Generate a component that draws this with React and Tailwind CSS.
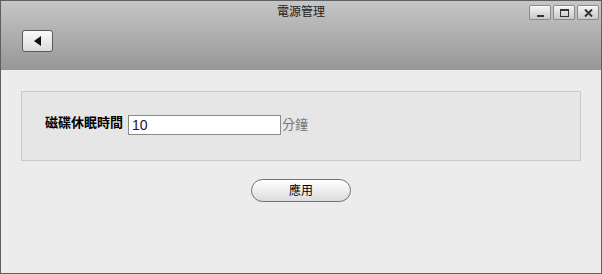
import React from 'react'

const WinBtn = ({ children }) => (
  <div className="w-[22px] h-[15px] rounded-[2px] border border-[#8a8a8a] bg-gradient-to-b from-[#f4f4f4] to-[#c8c8c8] flex items-center justify-center shadow-[inset_0_1px_0_#fff]">
    {children}
  </div>
)

const App = () => {
  return (
    <div className="w-[602px] h-[274px] border border-[#5f5f5f] bg-[#ececec] flex flex-col font-['Liberation_Sans','Noto_Sans_CJK_TC',sans-serif]">
      <div className="h-[69px] bg-gradient-to-b from-[#c6c6c6] to-[#979797] relative">
        <div className="text-center text-[12px] leading-[20px] text-[#222] pt-px">電源管理</div>
        <div className="absolute top-[4px] right-[2px] flex gap-[2px]">
          <WinBtn>
            <div className="w-[7px] h-[2px] bg-[#333] mt-[6px]" />
          </WinBtn>
          <WinBtn>
            <div className="w-[9px] h-[8px] border border-[#333] border-t-2" />
          </WinBtn>
          <WinBtn>
            <svg width="9" height="8" viewBox="0 0 9 8">
              <path d="M1 0.5 L8 7.5 M8 0.5 L1 7.5" stroke="#333" strokeWidth="2" />
            </svg>
          </WinBtn>
        </div>
        <div className="absolute left-[21px] top-[29px] w-[31px] h-[22px] rounded-[3px] border border-[#5a5a5a] bg-gradient-to-b from-[#fafafa] to-[#dcdcdc] flex items-center justify-center">
          <svg width="8" height="10" viewBox="0 0 8 10">
            <path d="M7 0 L0 5 L7 10 Z" fill="#111" />
          </svg>
        </div>
      </div>

      <div className="px-[20px] pt-[21px]">
        <div className="h-[70px] border border-[#cacaca] bg-[#e6e6e6] flex items-center pl-[23px] pb-[2px]">
          <span className="text-[13px] font-bold text-black mr-[5px] mt-[-5px]">磁碟休眠時間</span>
          <input
            type="text"
            defaultValue="10"
            className="w-[153px] h-[20px] border border-[#8a8a8a] bg-white px-[3px] text-[14px] text-[#1a1240] outline-none"
          />
          <span className="text-[13px] text-[#777] ml-px">分鐘</span>
        </div>
      </div>

      <div className="flex justify-center pt-[18px]">
        <button className="w-[100px] h-[23px] rounded-full border border-[#707070] bg-gradient-to-b from-[#ffffff] to-[#dcdcdc] text-[12px] text-black shadow-[inset_0_1px_0_#fff]">
          應用
        </button>
      </div>
    </div>
  )
}

export default App
